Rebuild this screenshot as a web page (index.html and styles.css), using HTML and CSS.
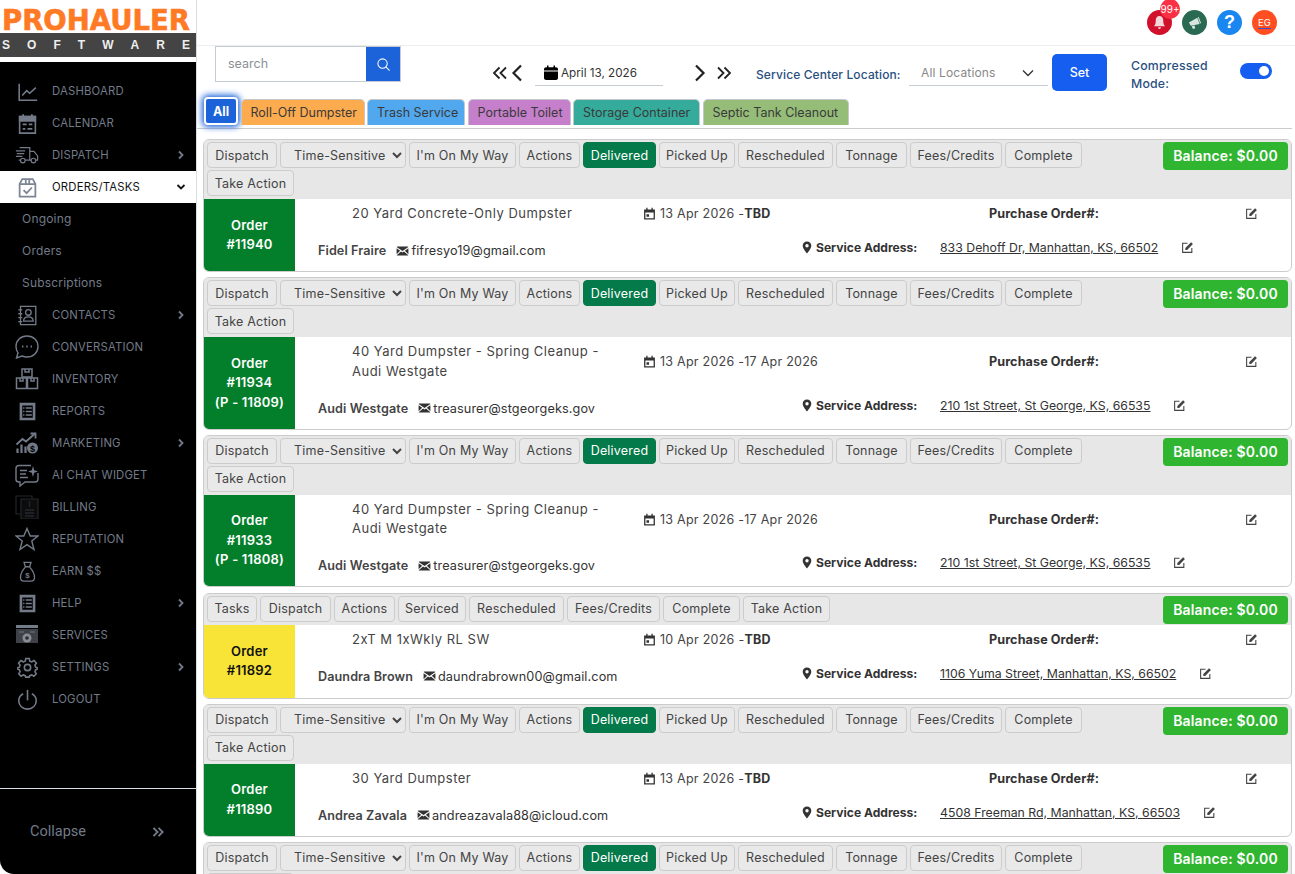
FILE: index.html
```html
<!DOCTYPE html>
<html lang="en">

<head>
    <meta charset="UTF-8">
    <meta name="viewport" content="width=device-width, initial-scale=1.0">
    <title>ProHauler - Orders/Tasks</title>
    <link rel="stylesheet" href="styles.css">
</head>

<body>
    <svg class="sprites" width="0" height="0">
        <symbol id="i-edit" viewBox="0 0 12 12">
            <path d="M10 6.5V10.5H1.5V2H6" fill="none" stroke="currentColor" stroke-width="1"/>
            <path d="M4 8.2V6.4L9.3 1.1L11 2.8L5.7 8.2Z" fill="currentColor"/>
        </symbol>
        <symbol id="i-date" viewBox="0 0 12 12">
            <path d="M1 2.2H3V.8H4.2V2.2H7.8V.8H9V2.2H11V11.6H1ZM2.2 5V10.4H9.8V5ZM3.2 6.8H5.6V9H3.2Z" fill="currentColor" fill-rule="evenodd"/>
        </symbol>
        <symbol id="i-mail" viewBox="0 0 14 11">
            <path d="M.5 1.2C.5.7.9.5 1.3.5H12.7C13.1.5 13.5.7 13.5 1.2L7 5.6ZM.5 2.6L4.4 5.3L.5 9ZM13.5 2.6V9L9.6 5.3ZM5.4 6L7 7.1L8.6 6L13.4 10.2C13.2 10.4 13 10.5 12.7 10.5H1.3C1 10.5.8 10.4.6 10.2Z" fill="currentColor"/>
        </symbol>
        <symbol id="i-pin" viewBox="0 0 10 13">
            <path d="M5 .5C2.5.5.7 2.4.7 4.8C.7 7.6 5 12.5 5 12.5S9.3 7.6 9.3 4.8C9.3 2.4 7.5.5 5 .5ZM5 6.5A1.7 1.7 0 1 1 5 3.1A1.7 1.7 0 0 1 5 6.5Z" fill="currentColor"/>
        </symbol>
        <symbol id="i-list" viewBox="0 0 24 24">
            <path d="M3 2H21V22H3ZM6 5V19H18V5Z" fill="currentColor" fill-rule="evenodd"/>
            <path d="M10 8H17M10 12H17M10 16H17" stroke="currentColor" stroke-width="1.6" fill="none"/>
            <path d="M7 8H8.5M7 12H8.5M7 16H8.5" stroke="currentColor" stroke-width="1.6" fill="none"/>
        </symbol>
        <symbol id="i-right" viewBox="0 0 10 10">
            <path d="M3 1.5L6.5 5L3 8.5" fill="none" stroke="currentColor" stroke-width="1.8"/>
        </symbol>
    </svg>

    <div class="app">
        <aside class="sidebar">
            <div class="logo">
                <div class="logo-name">PROHAULER</div>
                <div class="logo-sub"><span>S</span><span>O</span><span>F</span><span>T</span><span>W</span><span>A</span><span>R</span><span>E</span></div>
            </div>

            <nav class="menu">
                <a class="menu-item">
                    <svg class="menu-icon" viewBox="0 0 24 24" fill="none" stroke="currentColor" stroke-width="1.8"><path d="M2.5 3V22H23"/><path d="M6 16.5L11 11L14.5 14L21.5 7.5"/></svg>
                    <span>DASHBOARD</span>
                </a>
                <a class="menu-item">
                    <svg class="menu-icon" viewBox="0 0 24 24" fill="none" stroke="currentColor" stroke-width="1.8"><path d="M3 4H21V23H3Z"/><path d="M3 4H21V9H3Z" fill="currentColor"/><path d="M7 1.5V5M17 1.5V5" stroke-width="2"/><path d="M6.5 13H11M13.5 13H17.5M6.5 18H9.5M12 18H17.5" stroke-width="2"/></svg>
                    <span>CALENDAR</span>
                </a>
                <a class="menu-item">
                    <svg class="menu-icon wide" viewBox="0 0 26 24" fill="none" stroke="currentColor" stroke-width="1.3"><path d="M5 4H16V17.5H11M6 17.5H4"/><path d="M16 8H20.5L24.5 13V17.5H22.5M17.5 17.5H16"/><circle cx="8.5" cy="18" r="2.5"/><circle cx="20" cy="18" r="2.5"/><path d="M1 7.5H11M2 10.5H10M1 13.5H8"/></svg>
                    <span>DISPATCH</span>
                    <svg class="menu-arrow"><use href="#i-right"/></svg>
                </a>
                <a class="menu-item active">
                    <svg class="menu-icon" viewBox="0 0 24 24" fill="none" stroke="currentColor" stroke-width="2"><path d="M3 8L6 2.5H18L21 8V22.5H3Z"/><path d="M3 8H21M10 3V8M14 3V8"/><path d="M7.5 15L11 18.5L17 12"/></svg>
                    <span>ORDERS/TASKS</span>
                    <svg class="menu-arrow down" viewBox="0 0 10 10"><path d="M1.5 3L5 6.5L8.5 3" fill="none" stroke="currentColor" stroke-width="1.8"/></svg>
                </a>
                <a class="menu-sub">Ongoing</a>
                <a class="menu-sub">Orders</a>
                <a class="menu-sub">Subscriptions</a>
                <a class="menu-item">
                    <svg class="menu-icon" viewBox="0 0 24 24" fill="none" stroke="currentColor" stroke-width="1.5"><path d="M4 1.5H21.5V22.5H4Z"/><path d="M1.5 5.5H6M1.5 10H6M1.5 14.5H6M1.5 19H6"/><circle cx="13" cy="8.5" r="3.2"/><path d="M7.5 18.5C7.5 15 10 13.5 13 13.5S18.5 15 18.5 18.5Z"/></svg>
                    <span>CONTACTS</span>
                    <svg class="menu-arrow"><use href="#i-right"/></svg>
                </a>
                <a class="menu-item">
                    <svg class="menu-icon wide" viewBox="0 0 24 24" fill="none" stroke="currentColor" stroke-width="1.4"><path d="M12 1C5.5 1 1 5.5 1 11.5C1 14 1.8 16 3 17.8L1.5 23L7 21C8.5 21.7 10.2 22 12 22C18.5 22 23 17.500 23 11.500S18.500 1 12 1Z"/><path d="M7 11.500H8.400M11.300 11.500H12.700M15.600 11.500H17" stroke-width="1.800"/></svg>
                    <span>CONVERSATION</span>
                </a>
                <a class="menu-item">
                    <svg class="menu-icon wide" viewBox="0 0 24 24" fill="none" stroke="currentColor" stroke-width="1.500"><path d="M7 2H17V10H7Z"/><path d="M10 2V5H14V2"/><path d="M1.500 11H11.500V21.500H1.500ZM12.500 11H22.500V21.500H12.500Z"/><path d="M5 11V14H8V11M16 11V14H19V11"/></svg>
                    <span>INVENTORY</span>
                </a>
                <a class="menu-item">
                    <svg class="menu-icon"><use href="#i-list"/></svg>
                    <span>REPORTS</span>
                </a>
                <a class="menu-item">
                    <svg class="menu-icon wide" viewBox="0 0 24 24" fill="none" stroke="currentColor" stroke-width="1.800"><path d="M1.500 13.500L7.500 8L11 10.500L19.500 3"/><path d="M15.500 2.500H20.500V7.500"/><path d="M2.500 22V17.500M6.500 22V13.500M10.500 22V15.500" stroke-width="2.200"/><circle cx="17.500" cy="17" r="5.500" fill="currentColor" stroke="none"/><text class="menu-dollar" x="17.500" y="20.500" text-anchor="middle">$</text></svg>
                    <span>MARKETING</span>
                    <svg class="menu-arrow"><use href="#i-right"/></svg>
                </a>
                <a class="menu-item">
                    <svg class="menu-icon wide" viewBox="0 0 24 24" fill="none" stroke="currentColor" stroke-width="1.400"><path d="M16 2.500H4C2.500 2.500 1 3.500 1 5.500V16.500C1 18.500 2.500 19 4 19H5V23L10 19H20C22 19 23 18 23 16V10"/><path d="M5 7.500H12M5 11H11M5 14.500H13"/><path d="M18 3L19.200 7.300L23 8.500L19.200 9.700L18 14L16.800 9.700L13 8.500L16.800 7.300Z" fill="currentColor" stroke="none"/></svg>
                    <span>AI CHAT WIDGET</span>
                </a>
                <a class="menu-item">
                    <svg class="menu-icon wide billing" viewBox="0 0 24 24" fill="none" stroke="currentColor" stroke-width="1.200"><path d="M1 1H17V19H1Z"/><path d="M6 4H23V24H6Z" fill="#0c0c0c"/><path d="M10 15H19M10 18H19M10 21H19M14.500 6V12" stroke-width="1.400"/></svg>
                    <span>BILLING</span>
                </a>
                <a class="menu-item">
                    <svg class="menu-icon wide" viewBox="0 0 24 24" fill="none" stroke="currentColor" stroke-width="1.400"><path d="M12 1.500L15.200 9H23L16.800 14L19 22.500L12 17.700L5 22.500L7.200 14L1 9H8.800Z"/></svg>
                    <span>REPUTATION</span>
                </a>
                <a class="menu-item">
                    <svg class="menu-icon" viewBox="0 0 24 24" fill="none" stroke="currentColor" stroke-width="1.500"><path d="M8 1.500H16L14.500 6.500H9.500Z"/><path d="M9.500 6.500H14.500"/><path d="M9.500 7C6 11 4 15 4 18.500C4 21.500 6 23 8 23H16C18 23 20 21.500 20 18.500C20 15 18 11 14.500 7"/><text class="menu-bag" x="12" y="19.500" text-anchor="middle">$</text></svg>
                    <span>EARN $$</span>
                </a>
                <a class="menu-item">
                    <svg class="menu-icon"><use href="#i-list"/></svg>
                    <span>HELP</span>
                    <svg class="menu-arrow"><use href="#i-right"/></svg>
                </a>
                <a class="menu-item">
                    <svg class="menu-icon wide" viewBox="0 0 24 24"><path d="M1 2H23V5H1Z" fill="currentColor"/><path d="M1 6H23V20H1Z" fill="#3e4247"/><circle cx="12" cy="15" r="4.500" fill="#888d94"/><circle cx="12" cy="15" r="1.800" fill="#2a2c30"/><path d="M4 9H9M15 9H20" stroke="#6f7680" stroke-width="1.200"/></svg>
                    <span>SERVICES</span>
                </a>
                <a class="menu-item">
                    <svg class="menu-icon" viewBox="0 0 24 24" fill="none" stroke="currentColor" stroke-width="1.800"><circle cx="12" cy="12" r="3.600"/><path d="M10 1.800H14L14.600 4.800L16.800 5.700L19.400 4L22.200 6.900L20.500 9.400L21.300 11.600L23 12V14L21.300 14.700L20.500 16.800L22 19.300L19.300 22L16.800 20.500L14.600 21.300L14 23H10L9.400 21.300L7.200 20.500L4.700 22L2 19.300L3.500 16.800L2.700 14.700L1 14V12L2.700 11.600L3.500 9.400L1.800 6.900L4.600 4L7.200 5.700L9.400 4.800Z"/></svg>
                    <span>SETTINGS</span>
                    <svg class="menu-arrow"><use href="#i-right"/></svg>
                </a>
                <a class="menu-item">
                    <svg class="menu-icon" viewBox="0 0 24 24" fill="none" stroke="currentColor" stroke-width="1.800"><path d="M12 1V13"/><path d="M7 5.500C3.500 7.300 2 10.300 2 13.500C2 19 6.500 23 12 23S22 19 22 13.500C22 10.300 20.500 7.300 17 5.500"/></svg>
                    <span>LOGOUT</span>
                </a>
            </nav>

            <div class="collapse">
                <span>Collapse</span>
                <svg class="collapse-icon" viewBox="0 0 14 12" fill="none" stroke="currentColor" stroke-width="2"><path d="M1.500 1.500L6 6L1.500 10.500M7 1.500L11.500 6L7 10.500"/></svg>
            </div>
        </aside>

        <main class="main">
            <header class="topbar">
                <div class="round bell">
                    <svg viewBox="0 0 16 16" width="15" height="15"><path d="M8 1C5.500 1 4 3 4 5.500C4 9 3.500 10.500 2 12H14C12.500 10.500 12 9 12 5.500C12 3 10.500 1 8 1ZM6.500 13H9.500C9.500 14 8.800 15 8 15S6.500 14 6.500 13Z" fill="#f3d7da"/></svg>
                    <span class="badge">99+</span>
                </div>
                <div class="round horn">
                    <svg viewBox="0 0 16 16" width="15" height="15"><path d="M2 8L11 3L13.500 9.500L4 11.500ZM5 12L8 11.300L8.800 14L6.300 14.800ZM12.500 2L15 8.500L14 9L11.500 2.500Z" fill="#d9e6df"/></svg>
                </div>
                <div class="round help">?</div>
                <div class="round user"><span>EG</span></div>
            </header>

            <div class="toolbar">
                <div class="search">
                    <span class="search-text">search</span>
                    <div class="search-btn">
                        <svg viewBox="0 0 16 16" width="15" height="15" fill="none" stroke="#fff" stroke-width="1.100"><circle cx="7" cy="7" r="5"/><path d="M10.500 10.500L14.500 14.500"/></svg>
                    </div>
                </div>
                <div class="date-nav">
                    <svg class="nav-double" viewBox="0 0 16 14" fill="none" stroke="#222" stroke-width="1.800"><path d="M7.500 1.500L2 7L7.500 12.500M14 1.500L8.500 7L14 12.500"/></svg>
                    <svg class="nav-single" viewBox="0 0 12 18" fill="none" stroke="#222" stroke-width="2.200"><path d="M10 1.500L2.500 9L10 16.500"/></svg>
                    <div class="date-field">
                        <svg viewBox="0 0 14 15" width="14" height="15"><path d="M0 4.500C0 3 1 2.300 2 2.300H3V.5H4.500V2.300H9.500V.5H11V2.300H12C13 2.300 14 3 14 4.500V5.500H0ZM0 6.500H14V13C14 14 13 15 12 15H2C1 15 0 14 0 13Z" fill="#000"/></svg>
                        <span>April 13, 2026</span>
                    </div>
                    <svg class="nav-single next" viewBox="0 0 12 18" fill="none" stroke="#222" stroke-width="2.200"><path d="M2 1.500L9.500 9L2 16.500"/></svg>
                    <svg class="nav-double" viewBox="0 0 16 14" fill="none" stroke="#222" stroke-width="1.800"><path d="M2 1.500L7.500 7L2 12.500M8.500 1.500L14 7L8.500 12.500"/></svg>
                </div>
                <div class="location-label">Service Center Location:</div>
                <div class="location-select">
                    <span>All Locations</span>
                    <svg viewBox="0 0 12 8" width="12" height="8" fill="none" stroke="#333" stroke-width="1.300"><path d="M1 1.500L6 6.500L11 1.500"/></svg>
                </div>
                <button class="set-btn">Set</button>
                <div class="compressed">Compressed Mode:</div>
                <div class="toggle"><span></span></div>
            </div>

            <div class="tabs">
                <div class="tab tab-all">All</div>
                <div class="tab roll">Roll-Off Dumpster</div>
                <div class="tab trash">Trash Service</div>
                <div class="tab toilet">Portable Toilet</div>
                <div class="tab storage">Storage Container</div>
                <div class="tab septic">Septic Tank Cleanout</div>
            </div>

            <section class="orders">
                <div class="order-card">
                    <div class="order-bar">
                        <div class="order-actions">
                            <button class="act w-dispatch">Dispatch</button>
                            <select class="act-select"><option>Time-Sensitive</option></select>
                            <button class="act w-way">I'm On My Way</button>
                            <button class="act w-actions">Actions</button>
                            <button class="act w-delivered on">Delivered</button>
                            <button class="act w-picked">Picked Up</button>
                            <button class="act w-resched">Rescheduled</button>
                            <button class="act w-tonnage">Tonnage</button>
                            <button class="act w-fees">Fees/Credits</button>
                            <button class="act w-complete">Complete</button>
                            <button class="act w-take">Take Action</button>
                        </div>
                        <div class="balance">Balance: $0.00</div>
                    </div>
                    <div class="order-body">
                        <div class="order-no green">Order<br>#11940</div>
                        <div class="order-info">
                            <div class="info-top">
                                <div class="info-title">20 Yard Concrete-Only Dumpster</div>
                                <div class="info-date"><svg class="ico-date"><use href="#i-date"/></svg>13 Apr 2026 -<b>TBD</b></div>
                                <div class="info-po">Purchase Order#:</div>
                                <svg class="ico-edit"><use href="#i-edit"/></svg>
                            </div>
                            <div class="info-bottom">
                                <div class="info-contact"><b>Fidel Fraire</b><svg class="ico-mail"><use href="#i-mail"/></svg>fifresyo19@gmail.com</div>
                                <div class="info-address"><svg class="ico-pin"><use href="#i-pin"/></svg><b>Service Address:</b><a>833 Dehoff Dr, Manhattan, KS, 66502</a><svg class="ico-edit"><use href="#i-edit"/></svg></div>
                            </div>
                        </div>
                    </div>
                </div>

                <div class="order-card">
                    <div class="order-bar">
                        <div class="order-actions">
                            <button class="act w-dispatch">Dispatch</button>
                            <select class="act-select"><option>Time-Sensitive</option></select>
                            <button class="act w-way">I'm On My Way</button>
                            <button class="act w-actions">Actions</button>
                            <button class="act w-delivered on">Delivered</button>
                            <button class="act w-picked">Picked Up</button>
                            <button class="act w-resched">Rescheduled</button>
                            <button class="act w-tonnage">Tonnage</button>
                            <button class="act w-fees">Fees/Credits</button>
                            <button class="act w-complete">Complete</button>
                            <button class="act w-take">Take Action</button>
                        </div>
                        <div class="balance">Balance: $0.00</div>
                    </div>
                    <div class="order-body">
                        <div class="order-no green">Order<br>#11934<br>(P - 11809)</div>
                        <div class="order-info">
                            <div class="info-top">
                                <div class="info-title">40 Yard Dumpster - Spring Cleanup - Audi Westgate</div>
                                <div class="info-date"><svg class="ico-date"><use href="#i-date"/></svg>13 Apr 2026 -17 Apr 2026</div>
                                <div class="info-po">Purchase Order#:</div>
                                <svg class="ico-edit"><use href="#i-edit"/></svg>
                            </div>
                            <div class="info-bottom">
                                <div class="info-contact"><b>Audi Westgate</b><svg class="ico-mail"><use href="#i-mail"/></svg>treasurer@stgeorgeks.gov</div>
                                <div class="info-address"><svg class="ico-pin"><use href="#i-pin"/></svg><b>Service Address:</b><a>210 1st Street, St George, KS, 66535</a><svg class="ico-edit"><use href="#i-edit"/></svg></div>
                            </div>
                        </div>
                    </div>
                </div>

                <div class="order-card">
                    <div class="order-bar">
                        <div class="order-actions">
                            <button class="act w-dispatch">Dispatch</button>
                            <select class="act-select"><option>Time-Sensitive</option></select>
                            <button class="act w-way">I'm On My Way</button>
                            <button class="act w-actions">Actions</button>
                            <button class="act w-delivered on">Delivered</button>
                            <button class="act w-picked">Picked Up</button>
                            <button class="act w-resched">Rescheduled</button>
                            <button class="act w-tonnage">Tonnage</button>
                            <button class="act w-fees">Fees/Credits</button>
                            <button class="act w-complete">Complete</button>
                            <button class="act w-take">Take Action</button>
                        </div>
                        <div class="balance">Balance: $0.00</div>
                    </div>
                    <div class="order-body">
                        <div class="order-no green">Order<br>#11933<br>(P - 11808)</div>
                        <div class="order-info">
                            <div class="info-top">
                                <div class="info-title">40 Yard Dumpster - Spring Cleanup - Audi Westgate</div>
                                <div class="info-date"><svg class="ico-date"><use href="#i-date"/></svg>13 Apr 2026 -17 Apr 2026</div>
                                <div class="info-po">Purchase Order#:</div>
                                <svg class="ico-edit"><use href="#i-edit"/></svg>
                            </div>
                            <div class="info-bottom">
                                <div class="info-contact"><b>Audi Westgate</b><svg class="ico-mail"><use href="#i-mail"/></svg>treasurer@stgeorgeks.gov</div>
                                <div class="info-address"><svg class="ico-pin"><use href="#i-pin"/></svg><b>Service Address:</b><a>210 1st Street, St George, KS, 66535</a><svg class="ico-edit"><use href="#i-edit"/></svg></div>
                            </div>
                        </div>
                    </div>
                </div>

                <div class="order-card">
                    <div class="order-bar">
                        <div class="order-actions">
                            <button class="act w-tasks">Tasks</button>
                            <button class="act w-dispatch-t">Dispatch</button>
                            <button class="act w-actions">Actions</button>
                            <button class="act w-serviced">Serviced</button>
                            <button class="act w-resched-t">Rescheduled</button>
                            <button class="act w-fees-t">Fees/Credits</button>
                            <button class="act w-complete">Complete</button>
                            <button class="act w-take">Take Action</button>
                        </div>
                        <div class="balance">Balance: $0.00</div>
                    </div>
                    <div class="order-body">
                        <div class="order-no yellow">Order<br>#11892</div>
                        <div class="order-info">
                            <div class="info-top">
                                <div class="info-title">2xT M 1xWkly RL SW</div>
                                <div class="info-date"><svg class="ico-date"><use href="#i-date"/></svg>10 Apr 2026 -<b>TBD</b></div>
                                <div class="info-po">Purchase Order#:</div>
                                <svg class="ico-edit"><use href="#i-edit"/></svg>
                            </div>
                            <div class="info-bottom">
                                <div class="info-contact"><b>Daundra Brown</b><svg class="ico-mail"><use href="#i-mail"/></svg>daundrabrown00@gmail.com</div>
                                <div class="info-address"><svg class="ico-pin"><use href="#i-pin"/></svg><b>Service Address:</b><a>1106 Yuma Street, Manhattan, KS, 66502</a><svg class="ico-edit"><use href="#i-edit"/></svg></div>
                            </div>
                        </div>
                    </div>
                </div>

                <div class="order-card">
                    <div class="order-bar">
                        <div class="order-actions">
                            <button class="act w-dispatch">Dispatch</button>
                            <select class="act-select"><option>Time-Sensitive</option></select>
                            <button class="act w-way">I'm On My Way</button>
                            <button class="act w-actions">Actions</button>
                            <button class="act w-delivered on">Delivered</button>
                            <button class="act w-picked">Picked Up</button>
                            <button class="act w-resched">Rescheduled</button>
                            <button class="act w-tonnage">Tonnage</button>
                            <button class="act w-fees">Fees/Credits</button>
                            <button class="act w-complete">Complete</button>
                            <button class="act w-take">Take Action</button>
                        </div>
                        <div class="balance">Balance: $0.00</div>
                    </div>
                    <div class="order-body">
                        <div class="order-no green">Order<br>#11890</div>
                        <div class="order-info">
                            <div class="info-top">
                                <div class="info-title">30 Yard Dumpster</div>
                                <div class="info-date"><svg class="ico-date"><use href="#i-date"/></svg>13 Apr 2026 -<b>TBD</b></div>
                                <div class="info-po">Purchase Order#:</div>
                                <svg class="ico-edit"><use href="#i-edit"/></svg>
                            </div>
                            <div class="info-bottom">
                                <div class="info-contact"><b>Andrea Zavala</b><svg class="ico-mail"><use href="#i-mail"/></svg>andreazavala88@icloud.com</div>
                                <div class="info-address"><svg class="ico-pin"><use href="#i-pin"/></svg><b>Service Address:</b><a>4508 Freeman Rd, Manhattan, KS, 66503</a><svg class="ico-edit"><use href="#i-edit"/></svg></div>
                            </div>
                        </div>
                    </div>
                </div>

                <div class="order-card">
                    <div class="order-bar">
                        <div class="order-actions">
                            <button class="act w-dispatch">Dispatch</button>
                            <select class="act-select"><option>Time-Sensitive</option></select>
                            <button class="act w-way">I'm On My Way</button>
                            <button class="act w-actions">Actions</button>
                            <button class="act w-delivered on">Delivered</button>
                            <button class="act w-picked">Picked Up</button>
                            <button class="act w-resched">Rescheduled</button>
                            <button class="act w-tonnage">Tonnage</button>
                            <button class="act w-fees">Fees/Credits</button>
                            <button class="act w-complete">Complete</button>
                            <button class="act w-take">Take Action</button>
                        </div>
                        <div class="balance">Balance: $0.00</div>
                    </div>
                </div>
            </section>
        </main>
    </div>
</body>

</html>
```

FILE: styles.css
```css
* {
    margin: 0;
    padding: 0;
    box-sizing: border-box;
}

html,
body {
    height: 100%;
    overflow: hidden;
}

body {
    font-family: Inter, "Noto Sans", sans-serif;
    font-size: 12.5px;
    color: #444;
    background-color: #fff;
}

.sprites {
    position: absolute;
}

.app {
    display: flex;
    height: 874px;
}

/* sidebar */
.sidebar {
    width: 197px;
    flex-shrink: 0;
    display: flex;
    flex-direction: column;
    background-color: #000;
    color: #737b89;
    border-right: 1px solid #d8dde3;
    border-bottom-left-radius: 14px;
}

.logo {
    height: 62px;
    padding-top: 7px;
    background-color: #fff;
}

.logo-name {
    font-family: "DejaVu Sans", sans-serif;
    font-size: 27.5px;
    font-weight: 700;
    line-height: 26px;
    color: #ff7a24;
    padding-left: 2px;
    -webkit-text-stroke: 0.6px #ff7a24;
    white-space: nowrap;
}

.logo-sub {
    display: flex;
    justify-content: space-between;
    height: 24px;
    line-height: 24px;
    padding: 0 6px 0 2px;
    background-color: #444;
    color: #eee;
    font-family: "Liberation Sans", sans-serif;
    font-size: 12px;
    font-weight: 700;
}

.menu {
    flex: 1;
    padding-top: 13px;
}

.menu-item {
    display: flex;
    align-items: center;
    height: 32px;
    padding-left: 17px;
    font-size: 11.3px;
    letter-spacing: 0.2px;
}

.menu-item.active {
    background-color: #fff;
    color: #111;
}

.menu-item.active .menu-icon {
    color: #7c8594;
}

.menu-icon {
    width: 21px;
    height: 21px;
    margin-right: 14px;
    flex-shrink: 0;
}

.menu-icon.wide {
    width: 24px;
    height: 24px;
    margin: 0 13px 0 -2px;
}

.menu-icon.billing {
    color: #22262b;
}

.menu-dollar {
    font-family: "Liberation Sans", sans-serif;
    font-size: 9px;
    font-weight: 700;
    fill: #000;
    stroke: none;
}

.menu-bag {
    font-family: "Liberation Sans", sans-serif;
    font-size: 9px;
    font-weight: 700;
    fill: currentColor;
    stroke: none;
}

.menu-arrow {
    width: 10px;
    height: 10px;
    margin-left: auto;
    margin-right: 10px;
}

.menu-arrow.down {
    color: #111;
}

.menu-sub {
    display: block;
    height: 32px;
    line-height: 32px;
    padding-left: 22px;
    font-size: 12px;
    letter-spacing: 0.2px;
}

.collapse {
    height: 86px;
    display: flex;
    align-items: center;
    justify-content: space-between;
    padding: 0 31px 0 30px;
    border-top: 1px solid #d8dde3;
    font-family: Roboto, sans-serif;
    font-size: 14.5px;
}

.collapse-icon {
    width: 13px;
    height: 12px;
}

/* top bar */
.main {
    flex: 1;
    min-width: 0;
}

.topbar {
    height: 46px;
    display: flex;
    justify-content: flex-end;
    align-items: center;
    gap: 10px;
    padding: 0 18px 0 0;
    border-bottom: 1px solid #eee;
}

.round {
    position: relative;
    width: 25px;
    height: 25px;
    display: flex;
    align-items: center;
    justify-content: center;
    border-radius: 50%;
    color: #fff;
}

.bell {
    background-color: #d1112c;
}

.badge {
    position: absolute;
    top: -11px;
    right: -8px;
    width: 20px;
    height: 20px;
    border-radius: 50%;
    background-color: #fa3145;
    font-size: 10px;
    line-height: 20px;
    text-align: center;
    white-space: nowrap;
}

.horn {
    background-color: #2a6a52;
}

.help {
    background-color: #1a86f0;
    font-family: "Liberation Sans", sans-serif;
    font-size: 18px;
    font-weight: 700;
}

.user {
    background-color: #ff4f22;
    font-size: 9.5px;
}

.user span {
    border-bottom: 1px solid #3a4fd0;
}

/* toolbar */
.toolbar {
    height: 51px;
    display: flex;
    align-items: flex-start;
    padding-left: 18px;
}

.search {
    width: 186px;
    height: 36px;
    display: flex;
    border: 1px solid #c5ccd6;
}

.search-text {
    flex: 1;
    padding-left: 12px;
    line-height: 34px;
    color: #8a8f96;
}

.search-btn {
    width: 34px;
    display: flex;
    align-items: center;
    justify-content: center;
    background-color: #1c62d8;
}

.date-nav {
    display: flex;
    align-items: center;
    margin: 14px 0 0 91px;
    height: 26px;
}

.nav-double {
    width: 16px;
    height: 14px;
}

.nav-single {
    width: 12px;
    height: 18px;
    margin: 0 3px;
}

.nav-single.next {
    margin: 0 10px 0 3px;
}

.date-field {
    width: 128px;
    height: 26px;
    display: flex;
    align-items: center;
    gap: 3px;
    margin: 0 28px 0 9px;
    padding-left: 9px;
    border-bottom: 1px solid #c5ccd6;
    font-size: 11.7px;
    color: #333;
}

.location-label {
    margin: 21px 8px 0 24px;
    width: 145px;
    font-size: 12px;
    letter-spacing: 0.12px;
    font-weight: 500;
    color: #2a5080;
    white-space: nowrap;
}

.location-select {
    width: 139px;
    height: 26px;
    display: flex;
    justify-content: space-between;
    align-items: center;
    margin: 14px 0 0 0;
    padding: 0 14px 0 12px;
    border-bottom: 1px solid #c5ccd6;
    color: #888;
    font-size: 12px;
    letter-spacing: 0.15px;
}

.set-btn {
    width: 55px;
    height: 37px;
    margin: 8px 0 0 4px;
    border: none;
    border-radius: 5px;
    background-color: #155eef;
    color: #fff;
    font-family: inherit;
    font-size: 12.5px;
    font-weight: 500;
}

.compressed {
    width: 90px;
    margin: 11px 19px 0 24px;
    line-height: 18px;
    font-size: 12.3px;
    letter-spacing: 0.2px;
    font-weight: 500;
    color: #2a5080;
}

.toggle {
    width: 32px;
    height: 16px;
    margin-top: 17px;
    padding: 3px;
    display: flex;
    justify-content: flex-end;
    border-radius: 8px;
    background-color: #155eef;
}

.toggle span {
    width: 10px;
    height: 10px;
    border-radius: 50%;
    background-color: #fff;
}

/* service tabs */
.tabs {
    display: flex;
    align-items: flex-end;
    gap: 2.5px;
    height: 32px;
    margin: 0 3px 10px 0;
    padding: 0 0 3px 7px;
    border-bottom: 1px solid #ccc;
}

.tab {
    height: 26px;
    line-height: 25px;
    padding: 0 9px;
    border: 1px solid #c4c8cc;
    border-bottom: none;
    border-radius: 5px 5px 0 0;
    color: #3a3a3a;
    white-space: nowrap;
}

.tab-all {
    width: 34px;
    height: 28px;
    padding: 0;
    text-align: center;
    border: 2px solid #fff;
    border-radius: 4px;
    background-color: #1c62d8;
    color: #fff;
    font-weight: 700;
    box-shadow: 0 0 6px 2px #1c62d8;
}

.roll {
    width: 124px;
    background-color: #fdab4f;
}

.trash {
    width: 98px;
    background-color: #52a8ee;
}

.toilet {
    width: 103px;
    background-color: #c67fcb;
}

.storage {
    width: 127px;
    background-color: #35ab9c;
}

.septic {
    width: 146px;
    background-color: #95bd78;
}

/* order cards */
.orders {
    padding: 0 3px 0 6px;
}

.order-card {
    margin-bottom: 5.2px;
    border: 1px solid #ccc;
    border-radius: 6px;
    overflow: hidden;
}

.order-bar {
    display: flex;
    justify-content: space-between;
    align-items: flex-start;
    padding: 2px 3px 3px;
    background-color: #e7e7e7;
}

.order-actions {
    display: flex;
    flex-wrap: wrap;
    gap: 2px 3px;
    width: 956px;
}

.act {
    height: 26px;
    padding: 0;
    border: 1px solid #ccc;
    border-radius: 4px;
    background-color: #e9e9e9;
    color: #444;
    font-family: inherit;
    font-size: 12.5px;
    letter-spacing: 0.2px;
    white-space: nowrap;
}

.act.on {
    background-color: #04794a;
    border-color: #04794a;
    color: #fff;
}

.w-dispatch {
    width: 70px;
}

.w-way {
    width: 107px;
}

.w-actions {
    width: 61px;
}

.w-delivered {
    width: 73px;
}

.w-picked {
    width: 76px;
}

.w-resched {
    width: 95px;
}

.w-tonnage {
    width: 71px;
}

.w-fees {
    width: 92px;
}

.w-complete {
    width: 77px;
}

.w-take {
    width: 87px;
}

.w-tasks {
    width: 50px;
}

.w-dispatch-t {
    width: 71px;
}

.w-serviced {
    width: 68px;
}

.w-resched-t {
    width: 95px;
}

.w-fees-t {
    width: 93px;
}

.act-select {
    width: 126px;
    height: 26px;
    padding-left: 9px;
    border: 1px solid #ccc;
    border-radius: 4px;
    background-color: #e9e9e9;
    color: #444;
    font-family: inherit;
    font-size: 12.5px;
    letter-spacing: 0.2px;
}

.balance {
    width: 125px;
    height: 28px;
    margin-bottom: -2px;
    line-height: 28px;
    text-align: center;
    border-radius: 4px;
    background-color: #2fb52f;
    color: #fff;
    font-size: 14px;
    letter-spacing: 0.15px;
    font-weight: 600;
}

.order-body {
    display: flex;
}

.order-no {
    width: 91px;
    flex-shrink: 0;
    padding: 16.5px 0;
    line-height: 19.5px;
    text-align: center;
    font-size: 13px;
    font-weight: 600;
    letter-spacing: 0.2px;
}

.order-no.green {
    background-color: #037f2c;
    color: #fff;
}

.order-no.yellow {
    padding: 17px 0;
    background-color: #f7e437;
    color: #111;
}

.order-info {
    flex: 1;
    min-width: 0;
}

.info-top {
    display: flex;
    align-items: center;
    padding: 5px 0 3px;
}

.info-title {
    width: 349px;
    padding: 0 40px 0 57px;
    line-height: 19.5px;
    font-size: 13px;
    letter-spacing: 0.5px;
}

.info-date {
    width: 345px;
    display: flex;
    align-items: center;
    letter-spacing: 0.25px;
}

.info-date b {
    color: #333;
}

.info-po {
    width: 256px;
    font-weight: 700;
    font-size: 12.6px;
    letter-spacing: 0.1px;
    color: #333;
}

.info-bottom {
    display: flex;
    height: 44px;
}

.info-contact {
    width: 507px;
    display: flex;
    align-items: center;
    height: 24px;
    margin-top: 12px;
    padding-left: 23px;
    font-size: 12.7px;
    letter-spacing: 0.1px;
    color: #333;
}

.info-contact b {
    font-size: 12.6px;
    font-weight: 600;
    color: #444;
}

.info-address {
    display: flex;
    align-items: center;
    height: 24px;
    margin-top: 9px;
    color: #333;
}

.info-address b {
    width: 124px;
    font-size: 12.1px;
    font-weight: 700;
}

.info-address a {
    font-size: 12.3px;
    text-decoration: underline;
}

.info-address .ico-edit {
    margin-left: 23px;
}

.ico-edit {
    width: 13px;
    height: 13px;
    color: #444;
}

.ico-date {
    width: 13px;
    height: 13px;
    margin-right: 4px;
    margin-left: -1px;
    color: #333;
}

.ico-mail {
    width: 13px;
    height: 10px;
    margin: 0 2px 0 10px;
    color: #333;
}

.ico-pin {
    width: 10px;
    height: 13px;
    margin-right: 4px;
    color: #333;
}
```
